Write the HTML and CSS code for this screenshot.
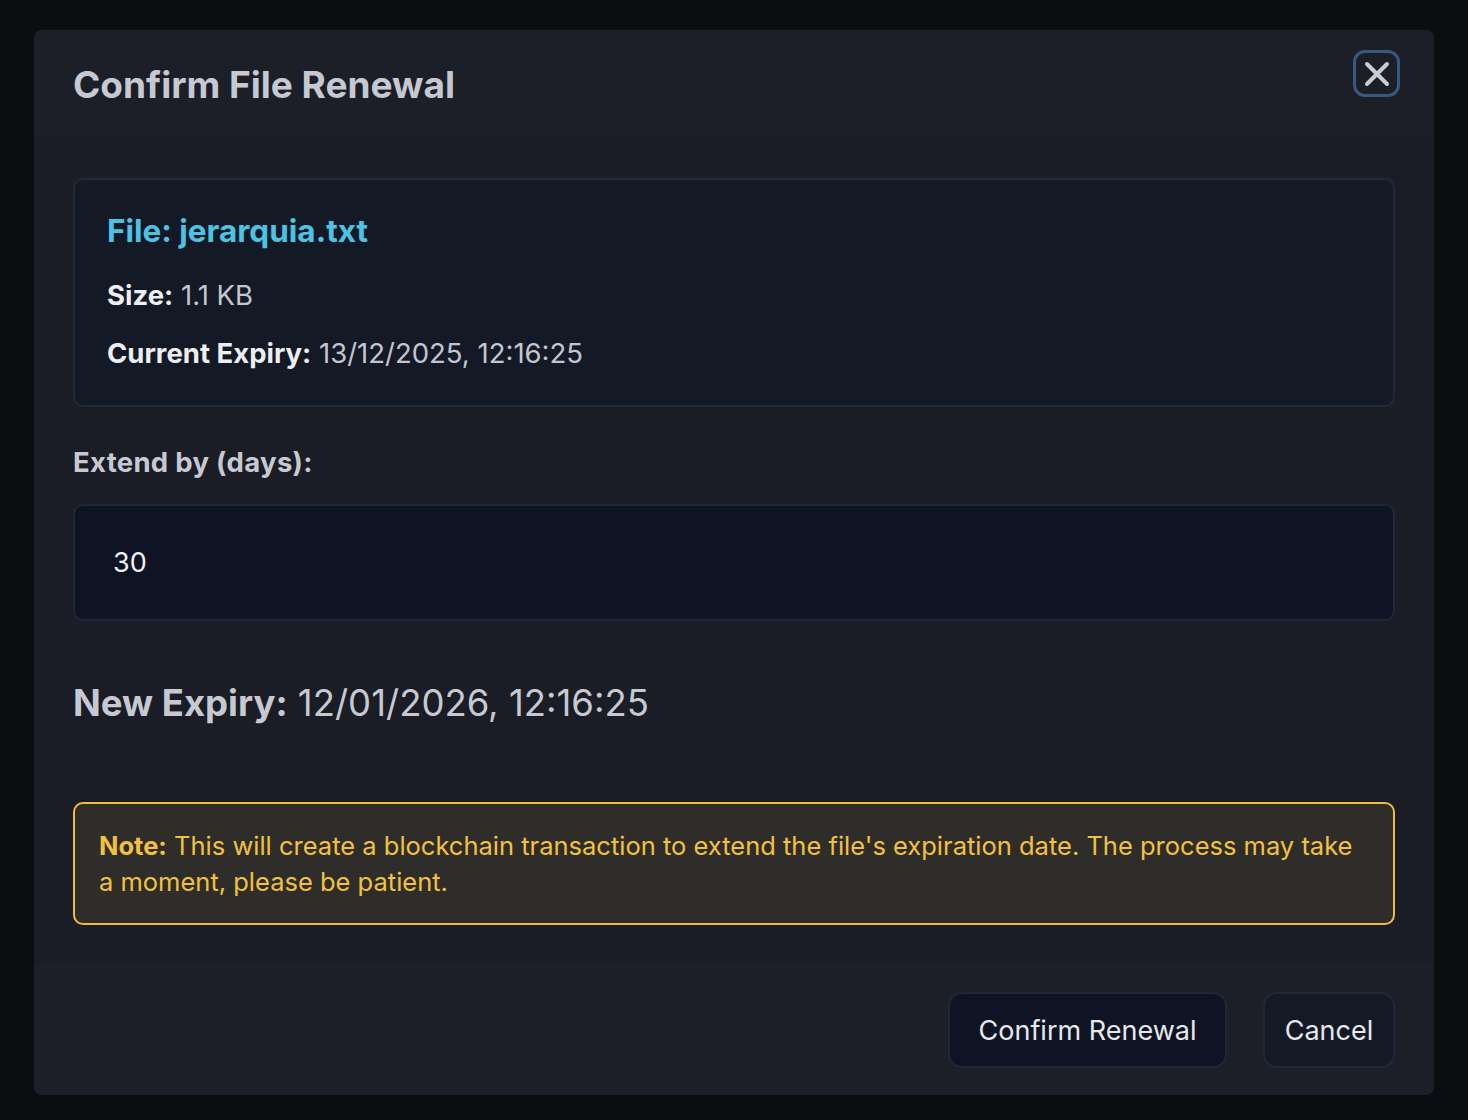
FILE: index.html
```html
<!DOCTYPE html>
<html lang="en">
<head>
<meta charset="utf-8">
<title>Confirm File Renewal</title>
<link rel="stylesheet" href="styles.css">
</head>
<body>
<div class="overlay">
  <div class="modal">
    <div class="modal-header">
      <h2 class="modal-title">Confirm File Renewal</h2>
      <button class="close-btn" aria-label="Close">
        <svg width="26" height="26" viewBox="0 0 26 26" fill="none">
          <path d="M3 3 L23 23 M23 3 L3 23" stroke="#c9ccd4" stroke-width="4" stroke-linecap="round"/>
        </svg>
      </button>
    </div>
    <div class="modal-body">
      <div class="file-card">
        <div class="file-name">File: jerarquia.txt</div>
        <div class="file-row size-row"><b>Size:</b> 1.1 KB</div>
        <div class="file-row"><b>Current Expiry:</b> 13/12/2025, 12:16:25</div>
      </div>
      <label class="field-label">Extend by (days):</label>
      <div class="input-box">30</div>
      <div class="new-expiry"><b>New Expiry:</b> 12/01/2026, 12:16:25</div>
      <div class="note"><b>Note:</b> This will create a blockchain transaction to extend the file's expiration date. The process may take a moment, please be patient.</div>
    </div>
    <div class="modal-footer">
      <button class="btn btn-confirm">Confirm Renewal</button>
      <button class="btn btn-cancel">Cancel</button>
    </div>
  </div>
</div>
</body>
</html>
```
FILE: styles.css
```css
html, body {
  margin: 0;
  padding: 0;
  background: #0b0d10;
  font-family: Inter, "Noto Sans", sans-serif;
}
.overlay {
  padding: 30px 34px 0 34px;
  height: 1120px;
  box-sizing: border-box;
}
.modal {
  width: 1400px;
  height: 1065px;
  background: #1a1d25;
  border-radius: 8px;
  overflow: hidden;
  display: flex;
  flex-direction: column;
}
.modal-header {
  height: 107px;
  box-sizing: border-box;
  background: #1c1f27;
  padding: 20px 34px 0 39px;
  display: flex;
  justify-content: space-between;
  align-items: flex-start;
}
.modal-title {
  margin: 13px 0 0 0;
  font-size: 37px;
  line-height: 44px;
  font-weight: 700;
  color: #c6c9d1;
  letter-spacing: 0;
}
.close-btn {
  width: 47px;
  height: 47px;
  box-sizing: border-box;
  border: 3px solid #37597e;
  border-radius: 12px;
  background: transparent;
  display: flex;
  align-items: center;
  justify-content: center;
  padding: 0;
}
.modal-body {
  flex: 1;
  padding: 41px 39px 0 39px;
  display: flex;
  flex-direction: column;
}
.file-card {
  background: #141926;
  border: 2px solid #222836;
  border-radius: 10px;
  padding: 33px 32px 30px 32px;
  height: 229px;
  box-sizing: border-box;
}
.file-name {
  font-size: 31.5px;
  line-height: 36px;
  font-weight: 700;
  color: #4cc3e3;
  margin-bottom: 27px;
}
.file-row {
  font-size: 27.5px;
  line-height: 39px;
  color: #c3c6ce;
}
.file-row b {
  color: #eceef1;
  font-weight: 700;
}
.size-row {
  margin-bottom: 19px;
}
.field-label {
  display: block;
  margin-top: 36px;
  font-size: 27.5px;
  line-height: 39px;
  font-weight: 700;
  color: #c6c9d1;
  letter-spacing: 0.3px;
}
.input-box {
  margin-top: 22px;
  height: 117px;
  box-sizing: border-box;
  background: #0e1424;
  border: 2px solid #20273a;
  border-radius: 10px;
  padding-left: 38px;
  display: flex;
  align-items: center;
  font-size: 27px;
  color: #eef0f3;
}
.new-expiry {
  margin-top: 61px;
  font-size: 36.5px;
  line-height: 43px;
  color: #c6c9d1;
}
.new-expiry b {
  font-weight: 700;
}
.note {
  margin-top: 77px;
  background: #2f2d29;
  border: 2px solid #f1bc3d;
  border-radius: 10px;
  padding: 24px 30px 23px 24px;
  font-size: 25.5px;
  line-height: 36px;
  color: #f3c142;
}
.modal-footer {
  height: 130px;
  box-sizing: border-box;
  background: #1c1f27;
  padding: 27px 39px 27px 39px;
  display: flex;
  justify-content: flex-end;
  gap: 36px;
}
.btn {
  height: 76px;
  box-sizing: border-box;
  border: 2px solid #20273a;
  border-radius: 14px;
  font-family: Inter, "Noto Sans", sans-serif;
  font-size: 27px;
  color: #e6e8ec;
  padding: 0;
}
.btn-confirm {
  width: 279px;
  background: #0e1424;
}
.btn-cancel {
  width: 132px;
  background: #141926;
}
```
